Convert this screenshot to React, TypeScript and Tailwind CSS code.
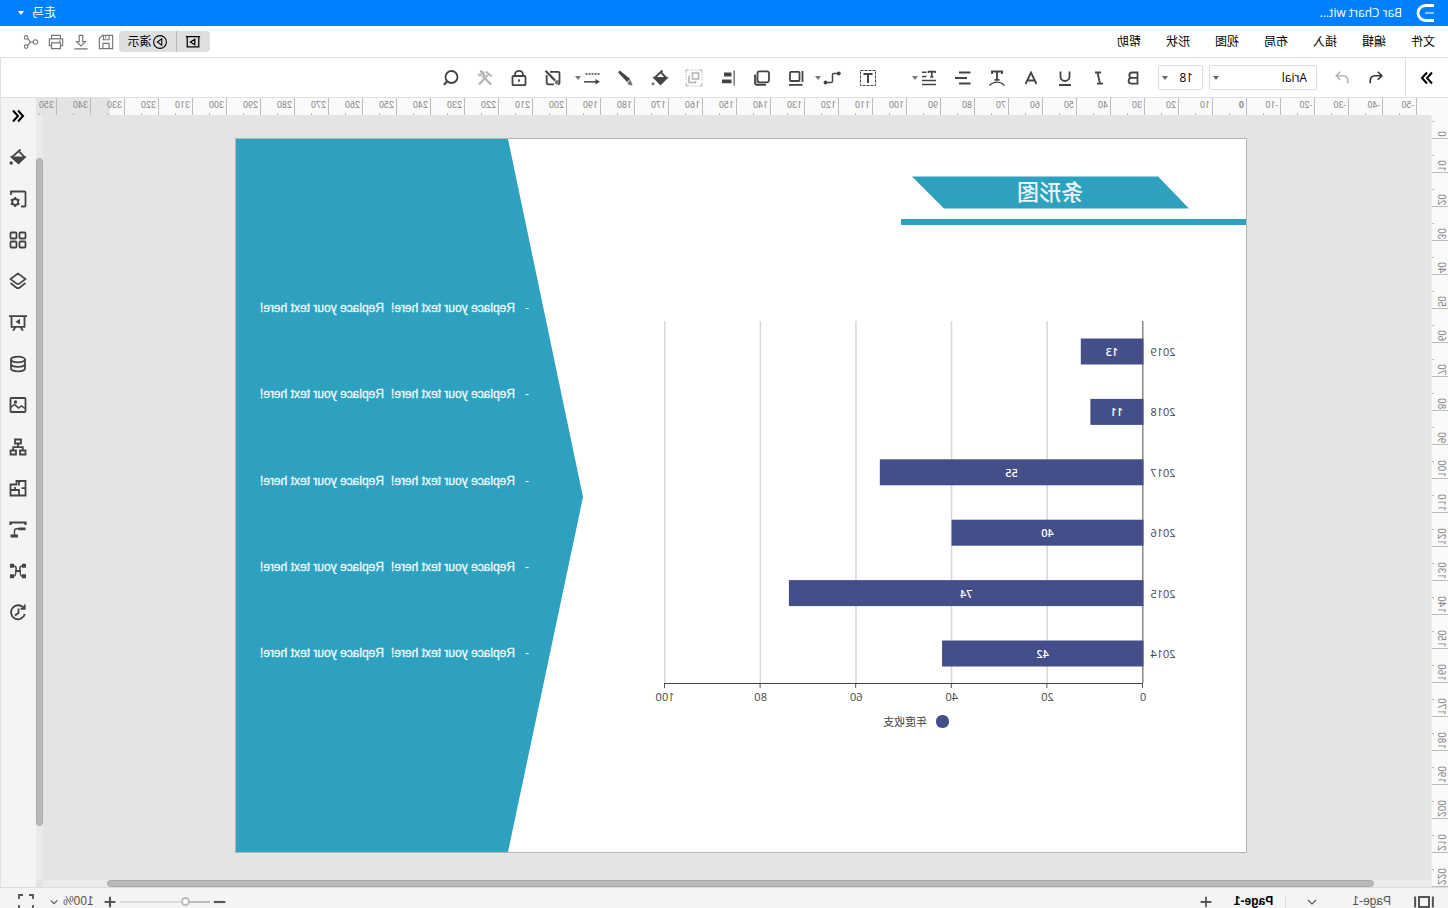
import { useState, type ReactNode } from "react";

type IconProps = {
  children: ReactNode;
  size?: string;
  stroke?: number;
};

function Icon({ children, size = "h-[18px] w-[18px]", stroke = 1.8 }: IconProps) {
  return (
    <svg viewBox="0 0 18 18" className={`${size} shrink-0`} fill="none" stroke="currentColor" strokeWidth={stroke} aria-hidden="true">
      {children}
    </svg>
  );
}

function Caret({ className = "" }: { className?: string }) {
  return (
    <svg viewBox="0 0 6 4" className={`h-1 w-[6px] shrink-0 ${className}`} fill="currentColor" aria-hidden="true">
      <path d="M0 0h6L3 4z" />
    </svg>
  );
}

type Tool = { name: string; icon: ReactNode; caret?: boolean; disabled?: boolean };

const textTools: Tool[] = [
  { name: "Bold", icon: <path d="M4.500 3.500h5.500a2.700 2.700 0 0 1 0 5.400H4.500zM4.500 8.900h6a2.900 2.900 0 0 1 0 5.800h-6z" /> },
  { name: "Italic", icon: <path d="M7 3.500h6M5 14.700h6M10.500 3.500l-2.500 11" /> },
  { name: "Underline", icon: <path d="M4.500 2.500v5a4.500 4.500 0 0 0 9 0v-5M3 16h12" /> },
  { name: "Font color", icon: <path d="M3.500 15 9 3.500 14.500 15M5.500 11.500h7" /> },
  {
    name: "Text style",
    icon: (
      <>
        <path d="M4 5V2.500h10V5M9 3v8M6.500 10.800h5" />
        <path d="M1.500 16.500c4-4.500 11-4.500 15 0" strokeWidth="1.400" />
      </>
    ),
  },
  { name: "Align", icon: <path d="M1.500 3.500h11.500M5 9h12M1.500 14.500h11.500" /> },
  {
    name: "Line spacing",
    caret: true,
    icon: (
      <>
        <path d="M3 4V2.700h6.500V4M6.200 3v5M4.600 8h3.200" strokeWidth="1.700" />
        <path d="M11.500 3.200h4.500M11.500 7.400h4.500M2 11.500h14M2 15.500h14" strokeWidth="1.500" />
      </>
    ),
  },
];

const textBoxTool: Tool = {
  name: "Text box",
  icon: (
    <>
      <rect x="1.500" y="1.500" width="15" height="15" strokeDasharray="3 1" strokeWidth="1" />
      <path d="M4.500 5h9M9 5v9" strokeWidth="2" />
    </>
  ),
};

const connectorTool: Tool = {
  name: "Connector",
  caret: true,
  icon: (
    <>
      <path d="M2 4.500h5.500a1 1 0 0 1 1 1V12a1.500 1.500 0 0 0 1.500 1.500h5" strokeWidth="1.500" />
      <circle cx="2.200" cy="4.500" r="1.900" fill="currentColor" stroke="none" />
      <circle cx="15.500" cy="13.500" r="1.900" fill="currentColor" stroke="none" />
    </>
  ),
};

const shapeTools: Tool[] = [
  {
    name: "Position",
    icon: (
      <>
        <rect x="5.500" y="2.800" width="9.500" height="9.200" rx="1" />
        <path d="M2.500 2v11M2.500 15.800h13.500" />
      </>
    ),
  },
  {
    name: "Order",
    icon: (
      <>
        <path d="M5 15.800h9a2 2 0 0 0 2-2V5.500" fill="#ccc" />
        <rect x="2" y="2.300" width="11.500" height="11" rx="2" fill="#fff" />
      </>
    ),
  },
  {
    name: "Distribute",
    icon: (
      <>
        <path d="M2.800 1.500v15" strokeWidth="1.500" stroke="#777" />
        <path d="M5.500 5.500h7.500M5.500 12.300h9.500" strokeWidth="3.800" />
      </>
    ),
  },
  {
    name: "Group",
    disabled: true,
    icon: (
      <>
        <path d="M1 4V1h3M14 1h3v3M17 14v3h-3M4 17H1v-3" strokeWidth="1" />
        <path d="M5 1h8M5 17h8M1 5v8M17 5v8" strokeDasharray="1.500 1" strokeWidth="0.800" />
        <path d="M4.500 4h6v6h-6zM12.800 7.500h1.200v6H7.500v-1.500" strokeWidth="1.600" />
      </>
    ),
  },
  {
    name: "Fill",
    icon: (
      <>
        <path d="M6.500 1.500 14.500 8.800 8.500 15 2.500 9l6-6" />
        <path d="M2.500 9h12l-6 6z" fill="currentColor" />
        <circle cx="16" cy="14.800" r="1.500" fill="#777" stroke="none" />
      </>
    ),
  },
  {
    name: "Line color",
    icon: (
      <>
        <path d="M15.200 1.500 17 3.200 8 13 4.800 10z" fill="currentColor" stroke="none" />
        <path d="m4.500 10.800 2.800 2.600c.5 2.200-2 3.200-5 2.900z" fill="#777" stroke="none" />
      </>
    ),
  },
  {
    name: "Line style",
    caret: true,
    icon: (
      <>
        <path d="M1.500 5h15" strokeDasharray="2 1" strokeWidth="1.400" />
        <path d="M5 12.800h12" strokeWidth="1.500" />
        <path d="M5.500 10v5.600L1 12.800z" fill="currentColor" stroke="none" />
      </>
    ),
  },
];

const extraTools: Tool[] = [
  {
    name: "Page background",
    icon: (
      <>
        <path d="M12 2.800H4a1.500 1.500 0 0 0-1.500 1.500v9.500A1.500 1.500 0 0 0 4 15.300M15.300 6v7.800a1.500 1.500 0 0 1-1.500 1.500H8" />
        <path d="M16.500 1.800 7 11.500" strokeWidth="2.200" />
        <circle cx="5" cy="13.300" r="2.200" fill="#777" stroke="none" />
      </>
    ),
  },
  {
    name: "Lock",
    icon: (
      <>
        <rect x="2.500" y="7" width="13" height="9.200" rx="1" />
        <path d="M5 7V5.800a4 4 0 0 1 8 0V7M9 10.300v2.400" />
      </>
    ),
  },
  {
    name: "Tools",
    disabled: true,
    icon: (
      <>
        <path d="m3 15.500 8.500-8.500M6.500 6l8.500 9.500" strokeWidth="2.300" />
        <path d="m16 5-2 1.500L12 5l1-2.800a3.400 3.400 0 0 0-2.500 5M2 7l2.500-1L8 2.500" strokeWidth="2" />
      </>
    ),
  },
  {
    name: "Search",
    icon: (
      <>
        <circle cx="8.500" cy="8" r="6" />
        <path d="m12.700 12.200 3.500 3.500" strokeWidth="2.200" />
      </>
    ),
  },
];

const sideTools: Tool[] = [
  { name: "Collapse", icon: <path d="M9 3.500 4 9l5 5.500M14 3.500 9 9l5 5.500" stroke="#000" strokeWidth="2" /> },
  {
    name: "Fill",
    icon: (
      <>
        <path d="M6.500 1.500 15 9l-6.500 6L2.500 9l5.800-5.800" />
        <path d="M2.500 9.500h12.500L8.500 15z" fill="currentColor" />
        <circle cx="15.800" cy="15" r="1.700" fill="currentColor" stroke="none" />
      </>
    ),
  },
  {
    name: "Page setup",
    icon: (
      <>
        <path d="M6 16.500H2.500a1 1 0 0 1-1-1v-13a1 1 0 0 1 1-1H16V5" />
        <circle cx="11.800" cy="12" r="3" />
        <path d="M11.800 7v2M11.800 15v2M7.500 9.500l1.700 1M14.500 13.500l1.700 1M7.500 14.500l1.700-1M14.500 10.500l1.700-1" />
      </>
    ),
  },
  {
    name: "Symbols",
    icon: (
      <>
        <rect x="1.500" y="1.500" width="6" height="6" rx="1" />
        <rect x="10.500" y="1.500" width="6" height="6" rx="1" />
        <rect x="1.500" y="10.500" width="6" height="6" rx="1" />
        <rect x="10.500" y="10.500" width="6" height="6" rx="1" />
      </>
    ),
  },
  {
    name: "Layers",
    icon: <path d="m9 1.500 7.500 5.500-5.700 4.300a3 3 0 0 1-3.600 0L1.500 7zM1.500 11l5.700 4.500a3 3 0 0 0 3.600 0L16.500 11" strokeWidth="1.600" />,
  },
  {
    name: "Presentation",
    icon: (
      <>
        <path d="M0 2.200h18M2.500 2.200v10.600h13V2.200M6.500 13 4 16.800M11.500 13l2.500 3.800" />
        <path d="M7 4.800v5.800L11.500 7.700z" fill="currentColor" stroke="none" />
      </>
    ),
  },
  {
    name: "Data",
    icon: (
      <>
        <ellipse cx="9" cy="4.500" rx="7" ry="2.800" />
        <path d="M2 4.500v9c0 1.500 3 2.800 7 2.800s7-1.300 7-2.800v-9M2 9c0 1.500 3 2.800 7 2.800S16 10.500 16 9" />
      </>
    ),
  },
  {
    name: "Picture",
    icon: (
      <>
        <rect x="1.500" y="2" width="15" height="14" rx="1" />
        <path d="m2 12.500 3.500-2.500 3 2 4-3.500 4 3" strokeWidth="1.500" />
        <circle cx="11.500" cy="6" r="1.700" fill="currentColor" stroke="none" />
      </>
    ),
  },
  {
    name: "Org chart",
    icon: <path d="M6 1.500h6v4H6zM1.500 12.500H7v4H1.500zM11 12.500h5.500v4H11zM9 5.500v4M4.200 12.500V9.200h9.600v3.300" />,
  },
  {
    name: "Floor plan",
    icon: <path d="M1.500 2h9v3.500h6v11h-15zM1.500 9.200h4M8 2v4.500M8 16.500v-5.500h4M12 8v3h4.500" />,
  },
  {
    name: "Timeline",
    icon: (
      <>
        <path d="M1.500 5V2.500h15V5" strokeWidth="2.200" />
        <path d="M1.500 8.800h7M9 16h7.500" strokeWidth="2.800" />
        <path d="M8 8.800h2.500a2 2 0 0 1 2 2V15" strokeWidth="1.400" />
      </>
    ),
  },
  {
    name: "Mind map",
    icon: (
      <>
        <path d="M1 3.800h4M13 3.800h4M1 14.200h4M13 14.200h4" strokeWidth="4" />
        <path d="M5 4.200h.8C7.800 4.200 7 9 7 9s-.5 5-1.500 5H5M13 4.200h-.8C10.200 4.200 11 9 11 9s.5 5 1.500 5h.5" strokeWidth="1.500" />
        <path d="M6 9h6" strokeWidth="2" />
      </>
    ),
  },
  {
    name: "History",
    icon: <path d="M3.200 5.300A7 7 0 1 1 2.200 11M2.300 1.500v4.300h4.200M8.500 5.500v4.500l3.500 2.500" />,
  },
];

const menus = ["文件", "编辑", "插入", "布局", "视图", "形状", "帮助"];

const quickTools: Tool[] = [
  { name: "Save", icon: <path d="M1.500 1.500h11.500L16.500 5v11.500h-15zM5.500 16.500v-6h7v6M5.500 1.500v5h6.500v-5M9.500 2.500v2.500" /> },
  { name: "Download", icon: <path d="M7 1.500h4v7h3L9 13.500 4 8.500h3zM1.500 16.800h15" /> },
  { name: "Print", icon: <path d="M4 5.500v-4h10v4M4 13H1.500V5.500h15V13H14M4 10h10v6.500H4zM3.800 8h2" /> },
  {
    name: "Share",
    icon: (
      <>
        <circle cx="4" cy="9" r="2.500" />
        <circle cx="14.500" cy="3.800" r="2" />
        <circle cx="14.500" cy="14.200" r="2" />
        <path d="M6.500 9h3l3.500-4M9.500 9l3.500 4" />
      </>
    ),
  },
];

const hMarks = Array.from({ length: 41 }, (_, i) => -50 + i * 10);
const vMarks = Array.from({ length: 23 }, (_, i) => i * 10);

const bars = [
  { year: "2019", value: 13 },
  { year: "2018", value: 11 },
  { year: "2017", value: 55 },
  { year: "2016", value: 40 },
  { year: "2015", value: 74 },
  { year: "2014", value: 42 },
];

const axis = [0, 20, 40, 60, 80, 100];

const notes = [173, 259, 346, 432, 518];

function ToolButton({ tool }: { tool: Tool }) {
  return (
    <button
      type="button"
      aria-label={tool.name}
      disabled={tool.disabled}
      className="relative flex h-6 w-[34px] shrink-0 items-center justify-center text-[#444] disabled:text-[#b5b5b5]"
    >
      <Icon>{tool.icon}</Icon>
      {tool.caret && <Caret className="absolute right-0 text-[#777]" />}
    </button>
  );
}

function TitleBar() {
  return (
    <header className="flex h-[26px] shrink-0 items-center bg-[#0080ff] pr-[18px] pl-[14px] text-xs text-white">
      <svg viewBox="0 0 18 18" className="h-[18px] w-[18px]" fill="none" stroke="#fff" strokeWidth="2.800" aria-hidden="true">
        <path d="M0 1.500h8.500a7.500 7.500 0 0 1 0 15H0" />
        <path d="M0 9h9" stroke="#8cc6ff" strokeWidth="2" />
      </svg>
      <span className="ml-[14px]">Bar Chart wit...</span>
      <button type="button" className="ml-auto flex items-center gap-2">
        走马
        <Caret />
      </button>
    </header>
  );
}

function MenuBar() {
  return (
    <div className="flex h-8 shrink-0 items-center border-b border-[#e0e0e0] bg-white pr-[19px] pl-[13px] text-xs text-black">
      <nav className="flex gap-[25px]">
        {menus.map((menu) => (
          <button key={menu} type="button">
            {menu}
          </button>
        ))}
      </nav>
      <div className="ml-auto flex h-[21px] rounded-sm bg-[#dfdfdf]">
        <button type="button" aria-label="Slides" className="flex w-[34px] items-center justify-center border-r border-[#bbb]">
          <Icon size="h-4 w-4" stroke={1.4}>
            <path d="M1 3h16M2.500 3v11.500h13V3M7 6v6l5-3z" />
          </Icon>
        </button>
        <button type="button" className="flex w-[57px] items-center justify-center">
          <Icon size="h-4 w-4" stroke={1.2}>
            <circle cx="9" cy="9" r="7.200" />
            <path d="M7 5.500v7l5-3.500z" />
          </Icon>
          演示
        </button>
      </div>
      <div className="flex">
        {quickTools.map((tool) => (
          <button key={tool.name} type="button" aria-label={tool.name} className="flex w-[25px] items-center justify-center text-[#777]">
            <Icon size="h-4 w-4" stroke={1.3}>
              {tool.icon}
            </Icon>
          </button>
        ))}
      </div>
    </div>
  );
}

function Toolbar() {
  const [font, setFont] = useState("Arial");
  const [size, setSize] = useState("18");

  return (
    <div className="flex h-10 shrink-0 items-center border-r border-b border-[#e0e0e0] bg-white">
      <button type="button" aria-label="Expand" className="flex h-full w-[43px] shrink-0 items-center justify-center border-r border-[#e0e0e0] text-black">
        <Icon stroke={2}>
          <path d="m4 3.500 5 5.500-5 5.500M9 3.500l5 5.500-5 5.500" />
        </Icon>
      </button>
      <div className="ml-3 flex">
        <button type="button" aria-label="Undo" className="flex w-[34px] items-center justify-center text-[#333]">
          <Icon size="h-4 w-4">
            <path d="M7 2 2.500 6.500 7 11M3 6.500h7.500a5 5 0 0 1 5 5V15" />
          </Icon>
        </button>
        <button type="button" aria-label="Redo" className="flex w-[34px] items-center justify-center text-[#b5b5b5]">
          <Icon size="h-4 w-4">
            <path d="m11 2 4.500 4.500L11 11M15 6.500H7.500a5 5 0 0 0-5 5V15" />
          </Icon>
        </button>
      </div>
      <div className="ml-2 flex gap-[6px] text-xs text-black">
        <div className="relative flex items-center">
          <select
            aria-label="Font"
            value={font}
            onChange={(e) => setFont(e.target.value)}
            className="h-[25px] w-[108px] appearance-none rounded-xs border border-[#ddd] bg-white pl-[9px] outline-none"
          >
            <option value="Arial">Arial</option>
          </select>
          <Caret className="pointer-events-none absolute right-1 text-[#666]" />
        </div>
        <div className="relative flex items-center">
          <select
            aria-label="Font size"
            value={size}
            onChange={(e) => setSize(e.target.value)}
            className="h-[25px] w-[45px] appearance-none rounded-xs border border-[#ddd] bg-white pl-[9px] outline-none"
          >
            <option value="18">18</option>
          </select>
          <Caret className="pointer-events-none absolute right-1 text-[#666]" />
        </div>
      </div>
      <div className="ml-2 flex">
        {textTools.map((tool) => (
          <ToolButton key={tool.name} tool={tool} />
        ))}
      </div>
      <div className="ml-[27px] flex gap-[2px]">
        <ToolButton tool={textBoxTool} />
        <ToolButton tool={connectorTool} />
      </div>
      <div className="ml-[2px] flex">
        {shapeTools.map((tool) => (
          <ToolButton key={tool.name} tool={tool} />
        ))}
      </div>
      <div className="ml-[5px] flex">
        {extraTools.map((tool) => (
          <ToolButton key={tool.name} tool={tool} />
        ))}
      </div>
    </div>
  );
}

function HorizontalRuler() {
  return (
    <div className="relative isolate flex h-[17px] shrink-0 overflow-hidden bg-[#fafafa] pl-[31px] font-['Roboto',sans-serif] text-[9px] leading-[14px] text-[#888]">
      <div className="absolute inset-y-0 right-0 -z-10 w-[74px] bg-[#e4e4e4]" />
      {hMarks.map((mark) => (
        <div key={mark} className="flex w-[34px] shrink-0 items-end border-l border-[#bbb]">
          <span className={`h-full w-4 pl-[2px] ${mark === 0 ? "font-bold" : ""}`}>{mark}</span>
          <span className="h-[2px] w-px shrink-0 bg-[#bbb]" />
        </div>
      ))}
    </div>
  );
}

function VerticalRuler() {
  return (
    <div className="flex w-[17px] shrink-0 flex-col overflow-hidden border-r border-[#eee] bg-[#fafafa] font-['Roboto',sans-serif] text-[10px] leading-3 text-[#888]">
      {vMarks.map((mark) => (
        <div key={mark} className="flex h-[34px] shrink-0 items-end justify-between border-b border-[#bbb] pl-[1px] first:h-6">
          <span className="rotate-180 pt-[1px] [writing-mode:vertical-rl]">{mark}</span>
          <span className="mb-4 h-px w-[2px] bg-[#bbb]" />
        </div>
      ))}
    </div>
  );
}

// chart origin is (103, 544) and one unit is 4.785 wide
function Slide() {
  return (
    <svg viewBox="0 0 1010 713" className="block w-full" role="img" aria-label="条形图">
      <path d="M88 37.500h246l-32 32H57z" fill="#2da1bf" />
      <text x="196" y="61" textAnchor="middle" fontSize="22" fontWeight="500" fill="#e8f6fa">
        条形图
      </text>
      <rect y="80" width="345" height="6" fill="#2da1bf" />

      <g fontSize="11" fill="#444" textAnchor="middle">
        {axis.map((tick) => (
          <g key={tick}>
            <rect x={102.5 + tick * 4.78} y="182" width="1.500" height="362" fill={tick === 0 ? "#888" : "#d8d8d8"} />
            <rect x={103 + tick * 4.78} y="544" width="1" height="5" fill="#555" />
            <text x={103 + tick * 4.78} y="562">
              {tick}
            </text>
          </g>
        ))}
        <rect x="103" y="544" width="479" height="1" fill="#444" />
        {bars.map((bar, i) => (
          <g key={bar.year}>
            <rect x="102.500" y={199.5 + i * 60.4} width={bar.value * 4.785 + 0.5} height="26" fill="#444f89" />
            <text x={103 + bar.value * 2.39} y={217 + i * 60.4} fill="#fff" fontWeight="600">
              {bar.value}
            </text>
            <text x="83" y={217 + i * 60.4}>
              {bar.year}
            </text>
          </g>
        ))}
        <rect x="297" y="576" width="13" height="13" rx="6" fill="#444f89" />
        <text x="341" y="587">
          年度收支
        </text>
      </g>

      <path d="M738 0h272v713H738L663 358z" fill="#2da1bf" />
      <g className="font-['Liberation_Sans',sans-serif]" fontSize="12" fill="#f0fafc" stroke="#f0fafc" strokeWidth="0.300">
        {notes.map((y) => (
          <g key={y}>
            <text x="717" y={y} stroke="none">
              -
            </text>
            <text x="731" y={y}>
              Replace your text here!
            </text>
            <text x="862" y={y}>
              Replace your text here!
            </text>
          </g>
        ))}
      </g>
    </svg>
  );
}

function SideBar() {
  return (
    <aside className="w-9 shrink-0 border-r border-[#e0e0e0] bg-[#f4f4f4] pt-2">
      <div className="flex h-[516px] flex-col items-center justify-between text-[#444]">
        {sideTools.map((tool) => (
          <button key={tool.name} type="button" aria-label={tool.name} className="flex h-5 w-5 items-center justify-center">
            <Icon>{tool.icon}</Icon>
          </button>
        ))}
      </div>
    </aside>
  );
}

function StatusBar() {
  const [zoom, setZoom] = useState(24);

  return (
    <footer className="h-[21px] shrink-0 border-t border-[#ddd] bg-[#f4f4f4] pt-[7px] font-['Liberation_Sans',sans-serif] text-xs leading-[13px] text-[#555]">
      <div className="flex h-[13px] items-center pr-[17px] pl-[14px]">
        <button type="button" aria-label="Pages">
          <Icon size="h-5 w-5" stroke={1.8}>
            <path d="M4.500 4.500h9v9h-9zM1 4v10M17 4v10" />
          </Icon>
        </button>
        <button type="button" className="ml-[23px] flex items-center gap-[34px]">
          Page-1
          <Icon size="h-3 w-3">
            <path d="m3 6 6 6 6-6" />
          </Icon>
        </button>
        <button type="button" className="ml-5 border-l border-[#ddd] pl-3 font-bold text-black">
          Page-1
        </button>
        <button type="button" aria-label="Add page" className="ml-5">
          <Icon size="h-4 w-4" stroke={2}>
            <path d="M9 3v12M3 9h12" />
          </Icon>
        </button>
        <div className="ml-auto flex items-center">
          <button type="button" aria-label="Zoom out">
            <Icon size="h-4 w-4" stroke={2.4}>
              <path d="M3 9h13" />
            </Icon>
          </button>
          <input
            type="range"
            aria-label="Zoom"
            value={zoom}
            onChange={(e) => setZoom(Number(e.target.value))}
            className="mx-[2px] h-[2px] w-[90px] appearance-none bg-linear-to-r from-[#bbb] from-27% to-[#ddd] to-27% [&::-webkit-slider-thumb]:h-[9px] [&::-webkit-slider-thumb]:w-[9px] [&::-webkit-slider-thumb]:appearance-none [&::-webkit-slider-thumb]:rounded-full [&::-webkit-slider-thumb]:border-2 [&::-webkit-slider-thumb]:border-[#bbb] [&::-webkit-slider-thumb]:bg-white"
          />
          <button type="button" aria-label="Zoom in">
            <Icon size="h-4 w-4" stroke={2.4}>
              <path d="M9 3v12M3 9h12" />
            </Icon>
          </button>
          <button type="button" className="ml-2 flex items-center gap-1">
            100%
            <Icon size="h-[10px] w-[10px]" stroke={2}>
              <path d="m3 6 6 6 6-6" />
            </Icon>
          </button>
          <button type="button" aria-label="Full screen" className="ml-[14px]">
            <Icon>
              <path d="M2 6V2h4M12 2h4v4M16 12v4h-4M6 16H2v-4" />
            </Icon>
          </button>
        </div>
      </div>
    </footer>
  );
}

export default function App() {
  return (
    <div className="flex h-screen -scale-x-100 flex-col overflow-hidden bg-[#e4e4e4] font-['Open_Sans','Noto_Sans_CJK_SC',sans-serif]">
      <TitleBar />
      <MenuBar />
      <Toolbar />
      <div className="flex min-h-0 flex-1">
        <div className="flex min-w-0 flex-1 flex-col">
          <HorizontalRuler />
          <div className="flex min-h-0 flex-1">
            <VerticalRuler />
            <div className="flex min-w-0 flex-1 flex-col">
              <main className="min-h-0 flex-1 overflow-hidden pt-[23px] pr-[199px] pl-[184px]">
                <div className="border border-[#b5b5b5] bg-white">
                  <Slide />
                </div>
              </main>
              <div className="mr-[7px] h-[7px] shrink-0 bg-[#ebebeb] pr-16 pl-[57px]">
                <div className="h-full rounded-full border border-[#aaa] bg-[#b9b9b9]" />
              </div>
            </div>
            <div className="-ml-[7px] mb-[7px] flex w-[7px] shrink-0 flex-col bg-[#ebebeb] pt-[43px] pb-[54px]">
              <div className="flex-1 rounded-full border border-[#aaa] bg-[#b9b9b9]" />
            </div>
          </div>
        </div>
        <SideBar />
      </div>
      <StatusBar />
    </div>
  );
}
